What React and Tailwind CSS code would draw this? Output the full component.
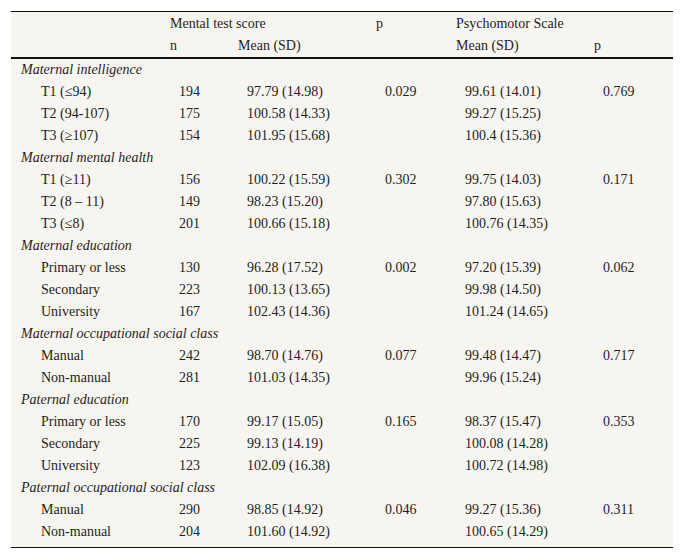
import React from "react";

const groups = [
  {
    title: "Maternal intelligence",
    rows: [
      ["T1 (≤94)", "194", "97.79 (14.98)", "0.029", "99.61 (14.01)", "0.769"],
      ["T2 (94-107)", "175", "100.58 (14.33)", "", "99.27 (15.25)", ""],
      ["T3 (≥107)", "154", "101.95 (15.68)", "", "100.4 (15.36)", ""],
    ],
  },
  {
    title: "Maternal mental health",
    rows: [
      ["T1 (≥11)", "156", "100.22 (15.59)", "0.302", "99.75 (14.03)", "0.171"],
      ["T2 (8 – 11)", "149", "98.23 (15.20)", "", "97.80 (15.63)", ""],
      ["T3 (≤8)", "201", "100.66 (15.18)", "", "100.76 (14.35)", ""],
    ],
  },
  {
    title: "Maternal education",
    rows: [
      ["Primary or less", "130", "96.28 (17.52)", "0.002", "97.20 (15.39)", "0.062"],
      ["Secondary", "223", "100.13 (13.65)", "", "99.98 (14.50)", ""],
      ["University", "167", "102.43 (14.36)", "", "101.24 (14.65)", ""],
    ],
  },
  {
    title: "Maternal occupational social class",
    rows: [
      ["Manual", "242", "98.70 (14.76)", "0.077", "99.48 (14.47)", "0.717"],
      ["Non-manual", "281", "101.03 (14.35)", "", "99.96 (15.24)", ""],
    ],
  },
  {
    title: "Paternal education",
    rows: [
      ["Primary or less", "170", "99.17 (15.05)", "0.165", "98.37 (15.47)", "0.353"],
      ["Secondary", "225", "99.13 (14.19)", "", "100.08 (14.28)", ""],
      ["University", "123", "102.09 (16.38)", "", "100.72 (14.98)", ""],
    ],
  },
  {
    title: "Paternal occupational social class",
    rows: [
      ["Manual", "290", "98.85 (14.92)", "0.046", "99.27 (15.36)", "0.311"],
      ["Non-manual", "204", "101.60 (14.92)", "", "100.65 (14.29)", ""],
    ],
  },
];

const cols = "grid grid-cols-[159px_68px_138px_80px_138px_79px]";

const App = () => {
  return (
    <div className="w-[684px] h-[559px] bg-white pt-[11px] pl-[11px]">
      <div className="w-[662px] bg-[#f7f5f0] text-[#1e1e1e] text-[14px] leading-[22px] font-['Liberation_Serif',serif] border-t border-b border-[#111]">
        <div className="border-b-2 border-[#111] pt-[1px] -mb-[1px]">
          <div className={cols}>
            <div></div>
            <div className="col-span-2">Mental test score</div>
            <div>p</div>
            <div className="col-span-2">Psychomotor Scale</div>
          </div>
          <div className={cols}>
            <div></div>
            <div>n</div>
            <div>Mean (SD)</div>
            <div></div>
            <div>Mean (SD)</div>
            <div>p</div>
          </div>
        </div>
        <div className="pt-[1px] pb-[4px]">
          {groups.map((g) => (
            <div key={g.title}>
              <div className="pl-[10px] italic">{g.title}</div>
              {g.rows.map((r, i) => (
                <div key={i} className={cols}>
                  <div className="pl-[30px]">{r[0]}</div>
                  <div className="pl-[9px]">{r[1]}</div>
                  <div className="pl-[9px]">{r[2]}</div>
                  <div className="pl-[9px]">{r[3]}</div>
                  <div className="pl-[9px]">{r[4]}</div>
                  <div className="pl-[9px]">{r[5]}</div>
                </div>
              ))}
            </div>
          ))}
        </div>
      </div>
    </div>
  );
};

export default App;
